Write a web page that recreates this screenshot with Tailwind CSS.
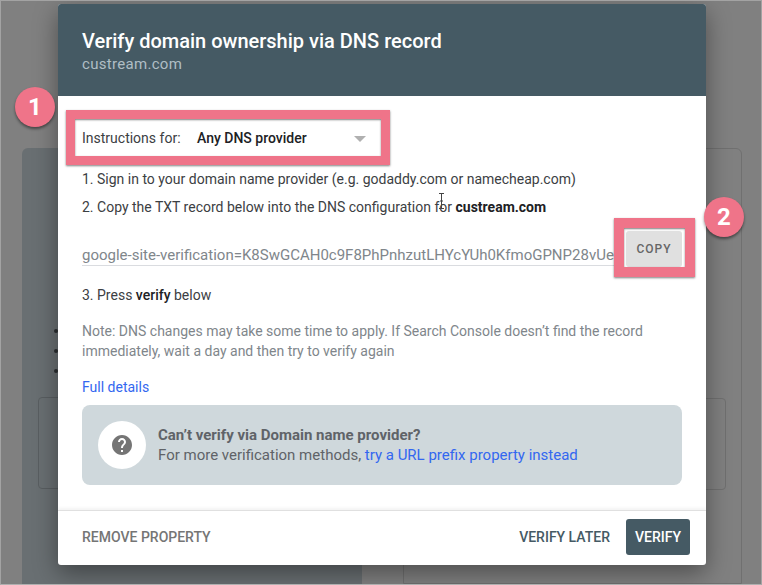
<!DOCTYPE html>
<html lang="en">
<head>
  <meta charset="UTF-8" />
  <title>Verify domain ownership</title>
  <script src="https://cdn.jsdelivr.net/npm/@tailwindcss/browser@4"></script>
</head>
<body class="font-['Roboto',sans-serif]">
  <div class="relative w-[762px] h-[585px] overflow-hidden bg-[#808080] border border-[#a3a3a3] border-b-[#b0b0b0]">
    <!-- Dimmed page behind the dialog -->
    <div class="flex gap-[41px] pl-[21px] pt-[147px] h-full">
      <div class="w-[340px] h-full bg-[#696f72] rounded-t-md pt-[249px] pl-[16px] pr-[16px]">
        <div class="h-[92px] border border-[#595e61] rounded"></div>
      </div>
      <div class="w-[339px] h-full border border-[#707070] rounded-t-md pt-[249px] pl-[16px] pr-[15px]">
        <div class="h-[92px] border border-[#707070] rounded"></div>
      </div>
    </div>
    <div class="absolute left-[53px] top-[328px] flex flex-col gap-[16px]">
      <div class="w-1 h-1 rounded-full bg-[#2b2f31]"></div>
      <div class="w-1 h-1 rounded-full bg-[#2b2f31]"></div>
      <div class="w-1 h-1 rounded-full bg-[#2b2f31]"></div>
    </div>

    <!-- Dialog -->
    <div class="absolute left-[57px] top-[3px] w-[648px] h-[561px] flex flex-col bg-white rounded-[3px] shadow-[0_8px_24px_rgba(0,0,0,0.4)] overflow-hidden">
      <div class="h-[92px] shrink-0 bg-[#455a64] pl-[24px] pt-[25px]">
        <h2 class="text-[20px] leading-[24px] font-medium text-white">Verify domain ownership via DNS record</h2>
        <p class="text-[15px] leading-[20px] mt-[1px] text-[#b0bec5] tracking-[0.3px]">custream.com</p>
      </div>

      <div class="flex-1 pl-[24px] pr-[24px] text-[14px] text-[#3c4043]">
        <div class="flex items-center h-[47px] mt-[19px] w-[284px] text-[#3c4043]">
          <span class="w-[115px]">Instructions for:</span>
          <span class="font-medium text-[#202124]">Any DNS provider</span>
          <span class="ml-auto w-0 h-0 border-x-[6px] border-x-transparent border-t-[6px] border-t-[#b0b0b0]"></span>
        </div>
        <p class="mt-[7px] leading-[20px]">1. Sign in to your domain name provider (e.g. godaddy.com or namecheap.com)</p>
        <p class="mt-[8px] leading-[20px]">2. Copy the TXT record below into the DNS configuration for <b class="font-bold text-[#202124]">custream.com</b></p>
        <div class="flex items-start mt-[22px] h-[38px]">
          <div class="w-[532px] h-[27px] border-b border-[#dadce0] text-[15px] text-[#80868b] leading-[33px] overflow-hidden whitespace-nowrap">google-site-verification=K8SwGCAH0c9F8PhPnhzutLHYcYUh0KfmoGPNP28vUe</div>
          <button class="ml-[12px] w-[56px] h-[36px] -mt-[8px] rounded-[3px] bg-[#e0e0e0] text-[12px] font-medium tracking-[1px] text-[#666666]">COPY</button>
        </div>
        <p class="mt-[8px] leading-[20px]">3. Press <b class="font-medium text-[#202124]">verify</b> below</p>
        <p class="mt-[16px] leading-[20px] w-[580px] text-[#80868b]">Note: DNS changes may take some time to apply. If Search Console doesn’t find the record immediately, wait a day and then try to verify again</p>
        <a class="block mt-[16px] leading-[20px] text-[#3367f0]">Full details</a>
        <div class="mt-[8px] h-[80px] flex items-center gap-[12px] pl-[16px] bg-[#cfd8dc] rounded-lg">
          <div class="w-[48px] h-[48px] rounded-full bg-white flex items-center justify-center">
            <svg width="24" height="24" viewBox="0 0 24 24" fill="#757575"><path d="M12 2C6.48 2 2 6.48 2 12s4.48 10 10 10 10-4.48 10-10S17.52 2 12 2zm1 17h-2v-2h2v2zm2.07-7.75l-.9.92C13.45 12.9 13 13.5 13 15h-2v-.5c0-1.1.45-2.1 1.17-2.83l1.24-1.26c.37-.36.59-.86.59-1.41 0-1.1-.9-2-2-2s-2 .9-2 2H8c0-2.21 1.79-4 4-4s4 1.79 4 4c0 .88-.36 1.68-.93 2.25z"/></svg>
          </div>
          <div class="text-[15px] leading-[20px] text-[#5f6368]">
            <p class="font-bold">Can’t verify via Domain name provider?</p>
            <p>For more verification methods, <a class="text-[#3367f0]">try a URL prefix property instead</a></p>
          </div>
        </div>
      </div>

      <div class="h-[55px] shrink-0 flex items-center pl-[24px] pr-[16px] pb-[2px] border-t border-[#e0e0e0] shadow-[0_-2px_3px_rgba(0,0,0,0.05)] text-[14px] font-medium">
        <span class="text-[#757575]">REMOVE PROPERTY</span>
        <span class="ml-auto text-[#455a64]">VERIFY LATER</span>
        <button class="ml-[16px] w-[64px] h-[36px] rounded-[3px] bg-[#455a64] text-white">VERIFY</button>
      </div>
    </div>

    <!-- Annotation overlays -->
    <div class="absolute left-[65px] top-[109px] w-[324px] h-[55px] border-[9px] border-[#ef7489] shadow-[0_1px_2px_rgba(0,0,0,0.5),inset_0_1px_2px_rgba(0,0,0,0.5)]"></div>
    <div class="absolute left-[613px] top-[217px] w-[81px] h-[59px] border-[10px] border-[#ef7489] shadow-[0_1px_2px_rgba(0,0,0,0.5),inset_0_1px_2px_rgba(0,0,0,0.5)]"></div>
    <div class="absolute left-[14px] top-[86px] w-[40px] h-[40px] rounded-full bg-[#ef7489] shadow-[0_2px_3px_rgba(0,0,0,0.45)] flex items-center justify-center text-white text-[24px] font-bold">1</div>
    <div class="absolute left-[703px] top-[196px] w-[40px] h-[40px] rounded-full bg-[#ef7489] shadow-[0_2px_3px_rgba(0,0,0,0.45)] flex items-center justify-center text-white text-[24px] font-bold">2</div>

    <!-- Text cursor -->
    <svg class="absolute left-[436px] top-[192px]" width="9" height="16" viewBox="0 0 9 16" fill="none" stroke="#444" stroke-width="1"><path d="M2 .5h5M4.5 .5v15M2 15.5h5M3 8h3"/></svg>
  </div>
</body>
</html>
